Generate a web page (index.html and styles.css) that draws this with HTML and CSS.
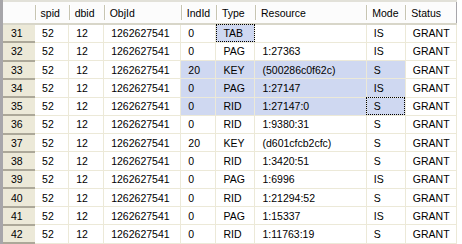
FILE: index.html
```html
<!DOCTYPE html>
<html lang="en">
<head>
    <meta charset="UTF-8">
    <title>Locks</title>
    <link rel="stylesheet" href="styles.css">
</head>
<body>
    <table class="grid">
        <colgroup>
            <col class="c-row">
            <col class="c-spid">
            <col class="c-dbid">
            <col class="c-obj">
            <col class="c-ind">
            <col class="c-type">
            <col class="c-res">
            <col class="c-mode">
            <col class="c-status">
        </colgroup>
        <thead>
            <tr>
                <th class="corner"></th>
                <th>spid</th>
                <th>dbid</th>
                <th>ObjId</th>
                <th>IndId</th>
                <th>Type</th>
                <th>Resource</th>
                <th>Mode</th>
                <th>Status</th>
            </tr>
        </thead>
        <tbody>
            <tr><th>31</th><td>52</td><td>12</td><td>1262627541</td><td>0</td><td class="sel focus">TAB</td><td></td><td>IS</td><td>GRANT</td></tr>
            <tr><th>32</th><td>52</td><td>12</td><td>1262627541</td><td>0</td><td>PAG</td><td>1:27363</td><td>IS</td><td>GRANT</td></tr>
            <tr><th>33</th><td>52</td><td>12</td><td>1262627541</td><td class="sel">20</td><td class="sel">KEY</td><td class="sel">(500286c0f62c)</td><td class="sel">S</td><td>GRANT</td></tr>
            <tr><th>34</th><td>52</td><td>12</td><td>1262627541</td><td class="sel">0</td><td class="sel">PAG</td><td class="sel">1:27147</td><td class="sel">IS</td><td>GRANT</td></tr>
            <tr><th>35</th><td>52</td><td>12</td><td>1262627541</td><td class="sel">0</td><td class="sel">RID</td><td class="sel">1:27147:0</td><td class="sel focus">S</td><td>GRANT</td></tr>
            <tr><th>36</th><td>52</td><td>12</td><td>1262627541</td><td>0</td><td>RID</td><td>1:9380:31</td><td>S</td><td>GRANT</td></tr>
            <tr><th>37</th><td>52</td><td>12</td><td>1262627541</td><td>20</td><td>KEY</td><td>(d601cfcb2cfc)</td><td>S</td><td>GRANT</td></tr>
            <tr><th>38</th><td>52</td><td>12</td><td>1262627541</td><td>0</td><td>RID</td><td>1:3420:51</td><td>S</td><td>GRANT</td></tr>
            <tr><th>39</th><td>52</td><td>12</td><td>1262627541</td><td>0</td><td>PAG</td><td>1:6996</td><td>IS</td><td>GRANT</td></tr>
            <tr><th>40</th><td>52</td><td>12</td><td>1262627541</td><td>0</td><td>RID</td><td>1:21294:52</td><td>S</td><td>GRANT</td></tr>
            <tr><th>41</th><td>52</td><td>12</td><td>1262627541</td><td>0</td><td>PAG</td><td>1:15337</td><td>IS</td><td>GRANT</td></tr>
            <tr><th>42</th><td>52</td><td>12</td><td>1262627541</td><td>0</td><td>RID</td><td>1:11763:19</td><td>S</td><td>GRANT</td></tr>
        </tbody>
    </table>
</body>
</html>
```

FILE: styles.css
```css
html{
    font-family: 'Liberation Sans', Arial, sans-serif;
    font-size: 10.5px;
    color: #000;
}

body{
    margin: 0;
    background: #fff;
    overflow: hidden;
}

.grid{
    border-collapse: collapse;
    table-layout: fixed;
    width: 457px;
    border-left: 3px solid #a7a6aa;
    border-right: 1px solid #a7a6aa;
}

.c-row{ width: 33px; }
.c-spid{ width: 34px; }
.c-dbid{ width: 35px; }
.c-obj{ width: 77px; }
.c-ind{ width: 35px; }
.c-type{ width: 39px; }
.c-res{ width: 111px; }
.c-mode{ width: 39px; }
.c-status{ width: 51px; }

thead th{
    position: relative;
    height: 21px;
    padding: 0 0 0 6px;
    text-align: left;
    font-weight: normal;
    background: #fcfcfc;
    border-top: 2px solid #e2e1d9;
    border-bottom: 2px solid #d8d6c9;
}

thead th::before{
    content: "";
    position: absolute;
    left: 0;
    top: 3px;
    bottom: 3px;
    width: 1px;
    background: #c7c5b2;
    box-shadow: 1px 0 0 #fff;
}

thead th.corner::before{
    display: none;
}

tbody tr{
    height: 18.27px;
}

tbody th{
    padding: 0 0 0 8px;
    text-align: left;
    font-weight: normal;
    background: #ece9d8;
    border-bottom: 2px solid #aca899;
    border-right: 1px solid #ece9d8;
}

td{
    padding: 0 0 0 7px;
    white-space: nowrap;
    overflow: hidden;
    border-right: 1px solid #ece9d8;
    border-bottom: 1px solid #ece9d8;
}

td.sel{
    background: #cfd8f1;
}

td.focus{
    outline: 1px dotted #000;
    outline-offset: -1px;
}
```
